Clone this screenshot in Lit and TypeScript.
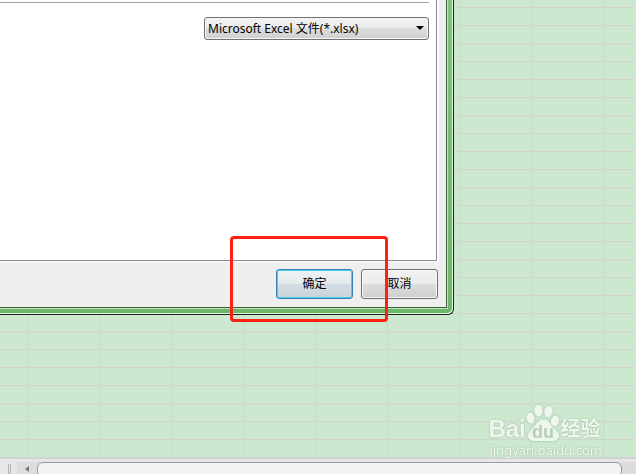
import { LitElement, html, css } from "lit";
import { customElement } from "lit/decorators.js";

@customElement("export-dialog")
class ExportDialog extends LitElement {
  static styles = css`
    :host {
      display: block;
      box-sizing: border-box;
      border: solid #17251a;
      border-width: 0 1px 1px 0;
      border-radius: 0 0 6px 0;
      background: #e4f4e2;
      padding: 0 1px 1px 0;
    }
    .frame {
      padding: 0 4px 4px 0;
      border-radius: 0 0 5px 0;
      background: linear-gradient(#7dc67a, #6cb868);
    }
    .inner {
      border: solid #c3e2bf;
      border-width: 0 1px 1px 0;
    }
    .body {
      border: solid #3b6139;
      border-width: 0 1px 1px 0;
      background: #efefef;
    }
    .page {
      box-sizing: border-box;
      min-height: 261px;
      margin-right: 9px;
      border: solid #8a8998;
      border-width: 0 1px 1px 0;
      background: #fff;
      box-shadow: 1px 1px 0 #fff, 2px 1px 0 #fff;
      padding: 2px 7px 0 0;
      display: flex;
      flex-direction: column;
      align-items: flex-end;
    }
    .rule {
      width: 100%;
      border: 0;
      border-top: 1px solid #a0a0a0;
      margin: 0 0 14px;
    }
    .picker {
      position: relative;
      display: flex;
      width: 225px;
      height: 23px;
    }
    select,
    button {
      box-sizing: border-box;
      margin: 0;
      border: 1px solid #707070;
      border-radius: 3px;
      background: linear-gradient(#f2f2f2, #ebebeb 50%, #dddddd 50%, #cfcfcf);
      box-shadow: inset 0 0 0 1px #f6f6f6;
      color: #000;
      font: 12px/18px "Noto Sans", "Noto Sans CJK SC", sans-serif;
    }
    select {
      appearance: none;
      width: 100%;
      height: 100%;
      padding: 0 20px 0 3px;
    }
    .arrow {
      position: absolute;
      right: 5px;
      top: 9px;
      width: 8px;
      height: 4px;
      pointer-events: none;
    }
    .actions {
      position: relative;
      display: flex;
      justify-content: flex-end;
      gap: 8px;
      padding: 8px 8px 8px 0;
    }
    button {
      width: 77px;
      height: 30px;
      padding: 0;
    }
    .primary {
      border-color: #3c7fb1;
      background: linear-gradient(#eef2f4, #e4eaed 50%, #d3dde3 50%, #c9d4da);
      box-shadow: inset 0 0 0 1px #48cdf3;
    }
    .marker {
      position: absolute;
      right: 58px;
      top: -25px;
      box-sizing: border-box;
      width: 158px;
      height: 86px;
      border: 3px solid #ff2013;
      border-radius: 4px;
      pointer-events: none;
    }
  `;

  render() {
    return html`
      <div class="frame">
        <div class="inner">
          <div class="body">
            <div class="page">
              <hr class="rule" />
              <div class="picker">
                <select aria-label="文件类型">
                  <option>Microsoft Excel 文件(*.xlsx)</option>
                </select>
                <svg class="arrow" viewBox="0 0 8 4" aria-hidden="true">
                  <path d="M0 0h8L4 4z" />
                </svg>
              </div>
            </div>
            <div class="actions">
              <button class="primary">确定</button>
              <button>取消</button>
              <div class="marker"></div>
            </div>
          </div>
        </div>
      </div>
    `;
  }
}

@customElement("site-mark")
class SiteMark extends LitElement {
  static styles = css`
    :host {
      display: block;
      color: #f2f8f2;
      opacity: 0.9;
      font-family: "Noto Sans", "Noto Sans CJK SC", sans-serif;
      text-shadow: 0 0 2px #8fac93;
    }
    .brand {
      display: flex;
      align-items: flex-end;
      height: 40px;
    }
    .latin {
      font: bold 24px/24px "Liberation Sans", sans-serif;
      width: 38px;
    }
    .paw {
      width: 34px;
      height: 38px;
      filter: drop-shadow(0 0 1px #9bb59e);
    }
    .du {
      font: bold 18px "Liberation Sans", sans-serif;
      fill: #b3ceb6;
      text-shadow: none;
    }
    .han {
      font: bold 20px/26px "Noto Sans CJK SC", sans-serif;
    }
    .site {
      font-size: 13px;
      line-height: 18px;
      padding-left: 1px;
    }
  `;

  render() {
    return html`
      <div class="brand">
        <span class="latin">Bai</span>
        <svg class="paw" viewBox="0 -1 34 38" aria-hidden="true">
          <g fill="#f2f8f2">
            <ellipse cx="4.500" cy="14" rx="3.900" ry="5.600" transform="rotate(-8 4.500 14)" />
            <ellipse cx="12.500" cy="6.500" rx="4.200" ry="5.900" />
            <ellipse cx="22.500" cy="7.500" rx="4.200" ry="5.700" transform="rotate(10 22.500 7.500)" />
            <ellipse cx="29" cy="17" rx="4.100" ry="5.300" transform="rotate(8 29 17)" />
            <path d="M17 15.500c-5 0-6 4-9 7.500-3 3-6 4.500-6 9 0 4 3 5 7 5h16c5 0 8-2 8-5.500 0-4-4-6-6.500-9-3-4-4.500-7-9.500-7z" />
          </g>
          <text class="du" x="6" y="34">du</text>
        </svg>
        <span class="han">经验</span>
      </div>
      <div class="site">jingyan.baidu.com</div>
    `;
  }
}

@customElement("app-root")
class AppRoot extends LitElement {
  static styles = css`
    :host {
      display: flex;
      flex-direction: column;
      height: 100vh;
      overflow: hidden;
    }
    .sheet {
      position: relative;
      flex: 1;
      background: repeating-linear-gradient(
            90deg,
            transparent 0 27px,
            #d2d4d2 27px 28px,
            transparent 28px 72px
          ),
        repeating-linear-gradient(
          transparent 0 7px,
          #d2d4d2 7px 8px,
          transparent 8px 18px
        ),
        #cce8cf;
    }
    .dialog {
      width: calc(100% - 182px);
    }
    .mark {
      position: absolute;
      right: 34px;
      bottom: -2px;
    }
    .scroll {
      display: flex;
      height: 12px;
      padding-top: 3px;
      border-top: 2px solid #d2d2d2;
      background: #e7e7e7;
    }
    .grip {
      box-sizing: border-box;
      width: 3px;
      height: 10px;
      margin: 2px 6px 0 8px;
      border: solid #b4b4b4;
      border-width: 0 1px;
    }
    .track {
      flex: 1;
      display: flex;
      background: #dcdcdc;
    }
    .back {
      display: flex;
      justify-content: center;
      width: 20px;
      padding: 0;
      border: 0;
      background: none;
    }
    .back svg {
      width: 4px;
      height: 6px;
      margin-top: 4px;
    }
    .thumb {
      box-sizing: border-box;
      flex: 1;
      height: 15px;
      margin-right: 14px;
      border: 1px solid #9c9c9c;
      border-radius: 6px;
      background: #f3f3f3;
    }
  `;

  render() {
    return html`
      <div class="sheet">
        <export-dialog class="dialog"></export-dialog>
        <site-mark class="mark"></site-mark>
      </div>
      <div class="scroll">
        <div class="grip"></div>
        <div class="track">
          <button class="back" aria-label="向左滚动">
            <svg viewBox="0 0 4 6"><path d="M4 0v6L0 3z" fill="#777" /></svg>
          </button>
          <div class="thumb"></div>
        </div>
      </div>
    `;
  }
}
